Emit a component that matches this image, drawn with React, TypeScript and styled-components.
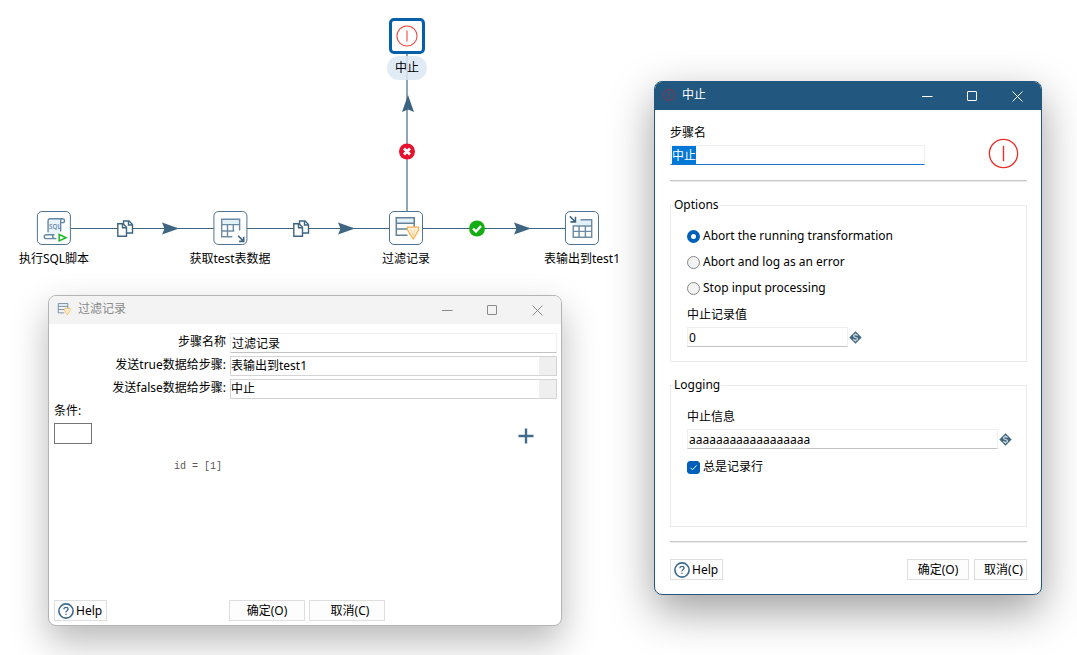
import React, { useEffect, useRef } from "react";
import styled, { createGlobalStyle, css } from "styled-components";

const STEEL = "#3d6480";
const SANS = `"Noto Sans", "Noto Sans CJK SC", sans-serif`;

const GlobalStyle = createGlobalStyle`
  *, *::before, *::after { box-sizing: border-box; }
  html, body { margin: 0; background: #ffffff; }
  body, button, input, select {
    font-family: ${SANS};
    font-size: 12px;
    line-height: 16px;
    color: #000000;
  }
  button, input, select { margin: 0; }
`;

/* ---------- canvas ---------- */

const Canvas = styled.main`
  position: relative;
  min-height: 100vh;
  overflow: hidden;
  background: #ffffff;
`;

const Hops = styled.svg`
  position: absolute;
  left: 0;
  top: 0;
  width: 640px;
  height: 280px;
`;

const StepNode = styled.div<{ $x: number; $y: number }>`
  position: absolute;
  left: ${(p) => p.$x}px;
  top: ${(p) => p.$y}px;
  transform: translateX(-50%);
  display: flex;
  flex-direction: column;
  align-items: center;
  gap: 2px;
`;

const StepBox = styled.button<{ $selected?: boolean }>`
  display: flex;
  align-items: center;
  justify-content: center;
  width: ${(p) => (p.$selected ? 36 : 34)}px;
  height: ${(p) => (p.$selected ? 36 : 34)}px;
  padding: 0;
  border: ${(p) => (p.$selected ? "3px solid #0460a9" : "1px solid #4d7391")};
  border-radius: 5px;
  background: #ffffff;
`;

const StepLabel = styled.span<{ $selected?: boolean }>`
  padding: 4px 8px;
  border-radius: 12px;
  white-space: nowrap;
  background: ${(p) => (p.$selected ? "rgba(220, 232, 243, 0.85)" : "transparent")};
`;

/* ---------- windows ---------- */

const Window = styled.section<{ $x: number; $y: number; $w: number; $h: number; $active?: boolean }>`
  position: absolute;
  left: ${(p) => p.$x}px;
  top: ${(p) => p.$y}px;
  width: ${(p) => p.$w}px;
  min-height: ${(p) => p.$h}px;
  display: flex;
  flex-direction: column;
  overflow: hidden;
  border: 1px solid ${(p) => (p.$active ? "#22587f" : "#b4b4b4")};
  border-radius: 8px;
  background: #ffffff;
  box-shadow: ${(p) =>
    p.$active ? "0 16px 44px rgba(0, 0, 0, 0.38)" : "0 16px 36px rgba(0, 0, 0, 0.28)"};
`;

const TitleBar = styled.header<{ $active?: boolean }>`
  display: flex;
  align-items: center;
  height: 28px;
  padding: 0 16px 2px 8px;
  gap: 7px;
  background: ${(p) => (p.$active ? "#22587f" : "#f3f3f3")};
  color: ${(p) => (p.$active ? "#ffffff" : "#8a8a8a")};
`;

const Title = styled.h2`
  flex: 1;
  margin: 0;
  font-size: 12px;
  font-weight: 400;
`;

const WindowControls = styled.div`
  display: flex;
  gap: 29px;
  padding-top: 2px;
`;

const ControlButton = styled.button`
  display: flex;
  align-items: center;
  justify-content: center;
  width: 16px;
  height: 16px;
  padding: 0;
  border: 0;
  background: none;
  color: inherit;
`;

const PushButton = styled.button<{ $w: number }>`
  display: flex;
  align-items: center;
  justify-content: center;
  width: ${(p) => p.$w}px;
  height: 21px;
  padding: 0;
  border: 1px solid #dedede;
  background: #fdfdfd;
  white-space: nowrap;
`;

const HelpButton = styled(PushButton)`
  justify-content: flex-start;
  gap: 2px;
  padding-left: 3px;
`;

const CancelButton = styled(PushButton)`
  padding-left: 6px;
`;

const field = css`
  width: 100%;
  height: 20px;
  padding: 0 1px;
  border: 1px solid #efefef;
  border-radius: 0;
  outline: 0;
  background: #ffffff;
`;

const TextInput = styled.input`
  ${field}
  border-bottom-color: #c2c2c2;
  &:focus {
    border-bottom-color: #1973cd;
  }
  &::selection {
    background: #0078d7;
    color: #ffffff;
  }
`;

const Combo = styled.select`
  ${field}
  appearance: none;
  padding: 0 18px 0 0;
  border-color: #d4d4d4;
  background: linear-gradient(#efefef, #efefef) right / 17px 100% no-repeat #ffffff;
`;

/* ---------- filter dialog ---------- */

const FilterBody = styled.div`
  flex: 1;
  display: flex;
  flex-direction: column;
  padding: 9px 4px 4px 5px;
`;

const FormGrid = styled.div`
  display: grid;
  grid-template-columns: 172px 1fr;
  gap: 3px 4px;
`;

const FormLabel = styled.label`
  padding-top: 1px;
  text-align: right;
  white-space: nowrap;
`;

const Condition = styled.div`
  flex: 1;
  padding-top: 4px;
`;

const ConditionBar = styled.div`
  display: flex;
  align-items: flex-start;
  justify-content: space-between;
  padding: 4px 23px 0 0;
`;

const NegateButton = styled.button`
  width: 38px;
  height: 21px;
  border: 1px solid #757575;
  background: #ffffff;
`;

const AddButton = styled.button`
  display: flex;
  width: 16px;
  height: 24px;
  padding: 5px 0 0;
  border: 0;
  background: none;
`;

const Expression = styled.code`
  display: block;
  padding: 12px 0 0 120px;
  font-family: "Liberation Mono", monospace;
  font-size: 10px;
  line-height: 16px;
  color: #555555;
`;

const FilterFooter = styled.footer`
  display: grid;
  grid-template-columns: 171px auto auto;
  justify-content: start;
  column-gap: 4px;
`;

/* ---------- abort dialog ---------- */

const AbortBody = styled.div`
  flex: 1;
  display: flex;
  flex-direction: column;
  padding: 15px 14px 14px 15px;
`;

const NameRow = styled.div`
  display: flex;
  align-items: flex-end;
  justify-content: space-between;
  height: 55px;
  padding: 0 8px 11px 0;
`;

const NameField = styled.div`
  align-self: flex-start;
  display: flex;
  flex-direction: column;
  gap: 4px;
  width: 255px;
`;

const Divider = styled.hr`
  width: 100%;
  height: 2px;
  margin: 0;
  border: 0;
  border-top: 1px solid #c8c8c8;
  border-bottom: 1px solid #ececec;
`;

const Group = styled.fieldset<{ $h: number }>`
  display: flex;
  flex-direction: column;
  min-width: 0;
  min-height: ${(p) => p.$h}px;
  margin: 15px 0 0;
  padding: 10px 13px 6px 16px;
  border: 1px solid #ebebeb;
`;

const Legend = styled.legend`
  margin-left: -14px;
  padding: 0 1px;
`;

const Choice = styled.label`
  display: flex;
  align-items: center;
  gap: 3px;
  height: 26px;
`;

const Radio = styled.input`
  appearance: none;
  width: 13px;
  height: 13px;
  border: 1px solid #868686;
  border-radius: 50%;
  background: #f3f3f3;
  &:checked {
    border: 4px solid #005fb8;
    background: #ffffff;
  }
`;

const TickBox = styled.span`
  display: grid;
  width: 13px;
  height: 13px;
  > * {
    grid-area: 1 / 1;
  }
  > svg {
    pointer-events: none;
  }
`;

const Checkbox = styled.input`
  appearance: none;
  width: 13px;
  height: 13px;
  border: 1px solid #868686;
  border-radius: 3px;
  &:checked {
    border-color: #005fb8;
    background: #005fb8;
  }
`;

const FieldLabel = styled.label`
  display: block;
  padding: 6px 0 4px;
`;

const VariableRow = styled.div<{ $w: number }>`
  display: flex;
  align-items: center;
  gap: 1px;
  width: ${(p) => p.$w}px;
  max-width: 100%;
  margin-bottom: 5px;
`;

const AbortFooter = styled.footer`
  display: flex;
  gap: 5px;
  padding-top: 16px;
`;

const Spacer = styled.span`
  flex: 1;
`;

/* ---------- icons ---------- */

const AbortIcon = ({ size, color = "#e8302a", stroke = 1.4 }: { size: number; color?: string; stroke?: number }) => (
  <svg width={size} height={size} viewBox="0 0 32 32" fill="none" stroke={color} strokeWidth={stroke}>
    <circle cx="16" cy="16" r="14.6" />
    <path d="M16 8v16" />
  </svg>
);

const SqlIcon = () => (
  <svg width="32" height="32" viewBox="0 0 33 33" fill="none" stroke="#6288a5" strokeWidth="1.4">
    <path d="M12 7h14l-3 3v13H10V10z" fill="#e9f4fc" stroke="none" />
    <path d="M10.500 21V9.500Q10.500 7 12.500 7H25q2.500 0 2.500 2t-2 2H23.500v9M23.500 11V9q0-2 1.500-2" />
    <path d="M17 23.500H9q-2.500 0-2.500 2t2.500 2h10M16 23.500q-2 2 1 4" />
    <text x="11.500" y="17.500" fontSize="6.500" fontFamily="Open Sans, sans-serif" fontWeight="600" fill="#6484a0" stroke="none">SQL</text>
    <path d="M22 23.200v6.600l7-3.300z" fill="#fff" stroke="#19b829" strokeWidth="1.600" />
  </svg>
);

const TableInputIcon = () => (
  <svg width="32" height="32" viewBox="0 0 33 33" fill="none" stroke="#6d8ca3" strokeWidth="1.500">
    <path d="M8 8h18v4.500H8z" fill="#e3f1fb" stroke="none" />
    <path d="M18.500 25.500H7.500V7.500h18.500V19M7.500 13H26M7.500 19.500h13M13.500 13v12.500M19.500 13v7" />
    <path d="M24.500 24.500l5.500 5.500M30.200 25.500v4.800H25.500" stroke={STEEL} strokeWidth="1.700" />
  </svg>
);

const TableOutputIcon = () => (
  <svg width="32" height="32" viewBox="0 0 33 33" fill="none" stroke="#6d8ca3" strokeWidth="1.500">
    <path d="M12 8h14v6H8z" fill="#e3f1fb" stroke="none" />
    <path d="M15 8h11.500v18H7.500V14.500h19M7.500 20h19M13.500 14.500V26M20 14.500V26" />
    <path d="M4 4.500l5.500 5.500M9.800 5v5.200H4.600" stroke={STEEL} strokeWidth="1.600" />
  </svg>
);

const FilterIcon = ({ size = 32 }: { size?: number }) => (
  <svg width={size} height={size} viewBox={size < 20 ? "4 3 27 27" : "0 0 33 33"} fill="none" stroke="#648299" strokeWidth="1.600">
    <path d="M6.500 6h18.500v5H6.500z" fill="#e3f1fb" stroke="none" />
    <path d="M18 24H6.500V6H25v9.500M6.500 11.500H25M6.500 17.500H18" />
    <path d="M18 15.500h11.500v3L24 28l-6-9.500z" fill="#fef3e2" stroke="#f8b04a" strokeWidth="1.300" />
    <path d="M21.500 17.500l2.500 7 2-7" stroke="#fbd08f" strokeWidth=".9" />
  </svg>
);

const HelpIcon = () => (
  <svg width="16" height="16" viewBox="0 0 16 16" fill="none" stroke="#3d6a8c">
    <circle cx="8" cy="8" r="7.100" strokeWidth="1.600" />
    <path d="M5.900 6.300q0-2 2.100-2t2.100 1.800q0 1-1.100 1.700T8 9.400M8 10.700v1.400" strokeWidth="1.300" />
  </svg>
);

const VariableGlyph = styled.svg`
  flex-shrink: 0;
`;

const VariableIcon = () => (
  <VariableGlyph width="13" height="13" viewBox="0 0 13 13" fill="none">
    <path d="M6.500.300l6.200 6.200-6.200 6.200L.300 6.500z" fill="#44697f" />
    <path d="M8.500 4.700C8 3.200 4.600 3.200 4.600 5c0 2 4 1 4 3.100 0 1.700-3.600 1.700-4.200.100" stroke="#d3dfe7" strokeWidth="1.100" />
    <path d="M6.500 2.400v1.300M6.500 9.400v1.300" stroke="#d3dfe7" strokeWidth=".8" />
  </VariableGlyph>
);

const Controls = () => (
  <WindowControls>
    <ControlButton aria-label="最小化">
      <svg width="11" height="11" viewBox="0 0 11 11" stroke="currentColor"><path d="M0 5.500h10.500" /></svg>
    </ControlButton>
    <ControlButton aria-label="最大化">
      <svg width="11" height="11" viewBox="0 0 11 11" stroke="currentColor" fill="none"><rect x=".5" y=".5" width="9" height="9" rx=".5" /></svg>
    </ControlButton>
    <ControlButton aria-label="关闭">
      <svg width="11" height="11" viewBox="0 0 11 11" stroke="currentColor"><path d="M.500.500l10 10M10.500.500l-10 10" /></svg>
    </ControlButton>
  </WindowControls>
);

const CopyMark = ({ x }: { x: number }) => (
  <g transform={`translate(${x} 220)`} fill="#fff" stroke={STEEL} strokeWidth="1.400">
    <path d="M6.500 1h5.500l3.500 3.500V13h-9z" />
    <path d="M11.500 1v4H15.500" fill="none" />
    <path d="M.800 3.800H6L9.500 7.300V16.200H.800z" />
    <path d="M5.500 3.800V7.800H9.500" fill="none" />
  </g>
);

const Arrow = ({ x, y, up }: { x: number; y: number; up?: boolean }) => (
  <path
    d="M-8-6L9 0L-8 6L-5.500 0z"
    fill={STEEL}
    transform={`translate(${x} ${y})${up ? " rotate(-90)" : ""}`}
  />
);

const STEPS = [
  { label: "执行SQL脚本", x: 54, icon: <SqlIcon /> },
  { label: "获取test表数据", x: 230, icon: <TableInputIcon /> },
  { label: "过滤记录", x: 406, icon: <FilterIcon /> },
  { label: "表输出到test1", x: 582, icon: <TableOutputIcon /> },
];

function HopLayer() {
  return (
    <Hops viewBox="0 0 640 280" aria-hidden="true">
      <path d="M71 228.500H566" stroke={STEEL} />
      <path d="M407 54V211" stroke="#8ea6b6" strokeWidth="2" />
      <CopyMark x={117} />
      <CopyMark x={293} />
      <Arrow x={170} y={228.5} />
      <Arrow x={346} y={228.5} />
      <Arrow x={522} y={228.5} />
      <Arrow x={408} y={104} up />
      <circle cx="407" cy="151.500" r="8" fill="#e8112d" />
      <path d="M404 148.500l6 6M410 148.500l-6 6" stroke="#fff" strokeWidth="2.800" />
      <circle cx="477" cy="228.500" r="8" fill="#12ae12" />
      <path d="M473 228.500l3 3 5-5.500" fill="none" stroke="#fff" strokeWidth="2.400" />
    </Hops>
  );
}

function FilterDialog() {
  return (
    <Window $x={48} $y={295} $w={514} $h={331}>
      <TitleBar>
        <FilterIcon size={14} />
        <Title>过滤记录</Title>
        <Controls />
      </TitleBar>
      <FilterBody>
        <FormGrid>
          <FormLabel htmlFor="step-name">步骤名称</FormLabel>
          <TextInput id="step-name" defaultValue="过滤记录" />
          <FormLabel htmlFor="true-step">发送true数据给步骤:</FormLabel>
          <Combo id="true-step"><option>表输出到test1</option><option>中止</option></Combo>
          <FormLabel htmlFor="false-step">发送false数据给步骤:</FormLabel>
          <Combo id="false-step"><option>中止</option><option>表输出到test1</option></Combo>
        </FormGrid>
        <Condition>
          条件:
          <ConditionBar>
            <NegateButton aria-label="取反" />
            <AddButton aria-label="添加条件">
              <svg width="16" height="16" viewBox="0 0 16 16" stroke="#416a8b" strokeWidth="2.400">
                <path d="M.500 8h15M8 .500v15" />
              </svg>
            </AddButton>
          </ConditionBar>
          <Expression>id = [1]</Expression>
        </Condition>
        <FilterFooter>
          <HelpButton $w={53}><HelpIcon />Help</HelpButton>
          <PushButton $w={76}>确定(O)</PushButton>
          <CancelButton $w={76}>取消(C)</CancelButton>
        </FilterFooter>
      </FilterBody>
    </Window>
  );
}

function AbortDialog() {
  const nameRef = useRef<HTMLInputElement>(null);
  useEffect(() => {
    nameRef.current?.focus();
    nameRef.current?.select();
  }, []);

  return (
    <Window $x={654} $y={81} $w={388} $h={514} $active>
      <TitleBar $active>
        <AbortIcon size={12} color="#a02c3c" stroke={2.4} />
        <Title>中止</Title>
        <Controls />
      </TitleBar>
      <AbortBody>
        <NameRow>
          <NameField>
            <label htmlFor="abort-name">步骤名</label>
            <TextInput id="abort-name" ref={nameRef} defaultValue="中止" />
          </NameField>
          <AbortIcon size={31} />
        </NameRow>
        <Divider />
        <Group $h={165}>
          <Legend>Options</Legend>
          <Choice><Radio type="radio" name="mode" defaultChecked />Abort the running transformation</Choice>
          <Choice><Radio type="radio" name="mode" />Abort and log as an error</Choice>
          <Choice><Radio type="radio" name="mode" />Stop input processing</Choice>
          <FieldLabel htmlFor="threshold">中止记录值</FieldLabel>
          <VariableRow $w={175}>
            <TextInput id="threshold" defaultValue="0" />
            <VariableIcon />
          </VariableRow>
        </Group>
        <Group $h={150}>
          <Legend>Logging</Legend>
          <FieldLabel htmlFor="message">中止信息</FieldLabel>
          <VariableRow $w={325}>
            <TextInput id="message" defaultValue="aaaaaaaaaaaaaaaaaa" />
            <VariableIcon />
          </VariableRow>
          <Choice>
            <TickBox>
              <Checkbox type="checkbox" defaultChecked />
              <svg width="13" height="13" viewBox="0 0 13 13" fill="none" stroke="#fff">
                <path d="M3.500 6.800l2 2 4-4.300" />
              </svg>
            </TickBox>
            总是记录行
          </Choice>
        </Group>
        <Spacer />
        <Divider />
        <AbortFooter>
          <HelpButton $w={53}><HelpIcon />Help</HelpButton>
          <Spacer />
          <PushButton $w={62}>确定(O)</PushButton>
          <CancelButton $w={53}>取消(C)</CancelButton>
        </AbortFooter>
      </AbortBody>
    </Window>
  );
}

export default function App() {
  return (
    <>
      <GlobalStyle />
      <Canvas>
        <HopLayer />
        <StepNode $x={407} $y={18}>
          <StepBox $selected aria-label="中止"><AbortIcon size={22} color="#ee4a44" stroke={1.6} /></StepBox>
          <StepLabel $selected>中止</StepLabel>
        </StepNode>
        {STEPS.map((s) => (
          <StepNode key={s.label} $x={s.x} $y={211}>
            <StepBox aria-label={s.label}>{s.icon}</StepBox>
            <StepLabel>{s.label}</StepLabel>
          </StepNode>
        ))}
        <FilterDialog />
        <AbortDialog />
      </Canvas>
    </>
  );
}
